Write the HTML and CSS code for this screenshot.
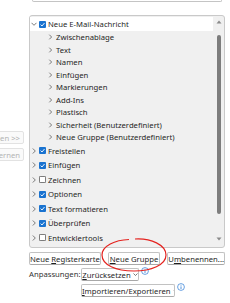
FILE: index.html
```html
<!DOCTYPE html>
<html>
<head>
<meta charset="utf-8">
<link rel="stylesheet" href="styles.css">
</head>
<body>
<div class="page">
  <div class="side">
    <div class="side-btn first"><span>Hinzufügen &gt;&gt;</span></div>
    <div class="side-btn"><span>Entfernen</span></div>
  </div>
  <div class="main">
    <div class="topbox"></div>
    <div class="tree">
      <div class="tree-body">
        <div class="row top sel">
          <svg class="chev" viewBox="0 0 6 6"><polyline points="0.5,1.8 3,4.3 5.5,1.8"/></svg>
          <svg class="cb" viewBox="0 0 7 7"><rect x="0" y="0" width="7" height="7" rx="1" class="on"/><polyline points="1.6,3.6 3,5 5.5,2" class="tick"/></svg>
          <span>Neue E-Mail-Nachricht</span>
        </div>
        <div class="row sub"><svg class="chev-s" viewBox="0 0 5 6"><polyline points="1.3,0.7 3.6,3 1.3,5.3"/></svg><span>Zwischenablage</span></div>
        <div class="row sub"><svg class="chev-s" viewBox="0 0 5 6"><polyline points="1.3,0.7 3.6,3 1.3,5.3"/></svg><span>Text</span></div>
        <div class="row sub"><svg class="chev-s" viewBox="0 0 5 6"><polyline points="1.3,0.7 3.6,3 1.3,5.3"/></svg><span>Namen</span></div>
        <div class="row sub"><svg class="chev-s" viewBox="0 0 5 6"><polyline points="1.3,0.7 3.6,3 1.3,5.3"/></svg><span>Einfügen</span></div>
        <div class="row sub"><svg class="chev-s" viewBox="0 0 5 6"><polyline points="1.3,0.7 3.6,3 1.3,5.3"/></svg><span>Markierungen</span></div>
        <div class="row sub"><svg class="chev-s" viewBox="0 0 5 6"><polyline points="1.3,0.7 3.6,3 1.3,5.3"/></svg><span>Add-Ins</span></div>
        <div class="row sub"><svg class="chev-s" viewBox="0 0 5 6"><polyline points="1.3,0.7 3.6,3 1.3,5.3"/></svg><span>Plastisch</span></div>
        <div class="row sub"><svg class="chev-s" viewBox="0 0 5 6"><polyline points="1.3,0.7 3.6,3 1.3,5.3"/></svg><span>Sicherheit (Benutzerdefiniert)</span></div>
        <div class="row sub"><svg class="chev-s" viewBox="0 0 5 6"><polyline points="1.3,0.7 3.6,3 1.3,5.3"/></svg><span>Neue Gruppe (Benutzerdefiniert)</span></div>
        <div class="row top cbrow">
          <svg class="chev" viewBox="0 0 6 6"><polyline points="1.8,0.5 4.3,3 1.8,5.5"/></svg>
          <svg class="cb" viewBox="0 0 7 7"><rect x="0" y="0" width="7" height="7" rx="1" class="on"/><polyline points="1.6,3.6 3,5 5.5,2" class="tick"/></svg>
          <span>Freistellen</span>
        </div>
        <div class="row top cbrow">
          <svg class="chev" viewBox="0 0 6 6"><polyline points="1.8,0.5 4.3,3 1.8,5.5"/></svg>
          <svg class="cb" viewBox="0 0 7 7"><rect x="0" y="0" width="7" height="7" rx="1" class="on"/><polyline points="1.6,3.6 3,5 5.5,2" class="tick"/></svg>
          <span>Einfügen</span>
        </div>
        <div class="row top cbrow">
          <svg class="chev" viewBox="0 0 6 6"><polyline points="1.8,0.5 4.3,3 1.8,5.5"/></svg>
          <svg class="cb" viewBox="0 0 7 7"><rect x="0.4" y="0.4" width="6.2" height="6.2" rx="0.8" class="off"/></svg>
          <span>Zeichnen</span>
        </div>
        <div class="row top cbrow">
          <svg class="chev" viewBox="0 0 6 6"><polyline points="1.8,0.5 4.3,3 1.8,5.5"/></svg>
          <svg class="cb" viewBox="0 0 7 7"><rect x="0" y="0" width="7" height="7" rx="1" class="on"/><polyline points="1.6,3.6 3,5 5.5,2" class="tick"/></svg>
          <span>Optionen</span>
        </div>
        <div class="row top cbrow">
          <svg class="chev" viewBox="0 0 6 6"><polyline points="1.8,0.5 4.3,3 1.8,5.5"/></svg>
          <svg class="cb" viewBox="0 0 7 7"><rect x="0" y="0" width="7" height="7" rx="1" class="on"/><polyline points="1.6,3.6 3,5 5.5,2" class="tick"/></svg>
          <span>Text formatieren</span>
        </div>
        <div class="row top cbrow">
          <svg class="chev" viewBox="0 0 6 6"><polyline points="1.8,0.5 4.3,3 1.8,5.5"/></svg>
          <svg class="cb" viewBox="0 0 7 7"><rect x="0" y="0" width="7" height="7" rx="1" class="on"/><polyline points="1.6,3.6 3,5 5.5,2" class="tick"/></svg>
          <span>Überprüfen</span>
        </div>
        <div class="row top cbrow">
          <svg class="chev" viewBox="0 0 6 6"><polyline points="1.8,0.5 4.3,3 1.8,5.5"/></svg>
          <svg class="cb" viewBox="0 0 7 7"><rect x="0.4" y="0.4" width="6.2" height="6.2" rx="0.8" class="off"/></svg>
          <span>Entwicklertools</span>
        </div>
      </div>
      <div class="scroll">
        <svg class="arrow" viewBox="0 0 6 4"><polygon points="0.5,3.5 3,0.5 5.5,3.5"/></svg>
        <div class="thumb"></div>
        <svg class="arrow" viewBox="0 0 6 4"><polygon points="0.5,0.5 3,3.5 5.5,0.5"/></svg>
      </div>
    </div>
    <div class="btn-row">
      <div class="btn w1"><span>Neue <u>R</u>egisterkarte</span></div>
      <div class="btn w2"><span><u>N</u>eue Gruppe</span></div>
      <div class="btn w3"><span>U<u>m</u>benennen...</span></div>
    </div>
    <div class="cust">
      <span class="label">Anpassungen:</span>
      <div class="cust-col">
        <div class="cust-line">
          <div class="btn dd w4"><span><u>Z</u>urücksetzen</span><svg class="dd-arrow" viewBox="0 0 5 3"><polyline points="0.5,0.5 2.5,2.5 4.5,0.5"/></svg></div>
          <svg class="info" viewBox="0 0 8 8"><circle cx="4" cy="4" r="3.4"/><line x1="4" y1="3.4" x2="4" y2="6"/><line x1="4" y1="1.9" x2="4" y2="2.6"/></svg>
        </div>
        <div class="cust-line">
          <div class="btn dd w5"><span><u>I</u>mportieren/Exportieren</span><svg class="dd-arrow" viewBox="0 0 5 3"><polyline points="0.5,0.5 2.5,2.5 4.5,0.5"/></svg></div>
          <svg class="info" viewBox="0 0 8 8"><circle cx="4" cy="4" r="3.4"/><line x1="4" y1="3.4" x2="4" y2="6"/><line x1="4" y1="1.9" x2="4" y2="2.6"/></svg>
        </div>
      </div>
    </div>
  </div>
  <svg class="annot" viewBox="0 0 70 38"><path d="M36,3 C52,2 67,9 67,19 C67,29 52,35 35,35 C17,35 3,29 3,19 C3,10 16,4 30,3.5"/></svg>
</div>
</body>
</html>
```

FILE: styles.css
```css
html, body {
  margin: 0;
  padding: 0;
  background: #ffffff;
}
body {
  width: 230px;
  height: 303px;
  overflow: hidden;
  font-family: "Noto Sans", "Open Sans", sans-serif;
  font-size: 7.7px;
  color: #1f1f1f;
}
.page {
  position: relative;
  display: flex;
  width: 230px;
  height: 303px;
}
.side {
  width: 29px;
  flex: none;
  overflow: hidden;
  display: flex;
  flex-direction: column;
  align-items: flex-end;
}
.side-btn {
  width: 64px;
  height: 13px;
  margin-right: 5px;
  box-sizing: border-box;
  border: 1px solid #e2e2e2;
  border-radius: 2px;
  background: #fafafa;
  color: #b4b4b4;
  display: flex;
  align-items: center;
  justify-content: flex-end;
  padding-right: 3px;
  white-space: nowrap;
  margin-top: 4px;
}
.side-btn.first {
  margin-top: 131px;
}
.main {
  width: 196px;
  flex: none;
  display: flex;
  flex-direction: column;
}
.topbox {
  height: 1px;
  margin: 0 3px 0 3px;
  border: 1px solid #c4c4c4;
  border-top: 0;
  border-radius: 0 0 3px 3px;
}
.tree {
  margin-top: 13px;
  height: 233px;
  box-sizing: border-box;
  border: 1px solid #c9c9c9;
  border-radius: 3px;
  background: #f0f0f0;
  display: flex;
}
.tree-body {
  flex: 1;
  padding-top: 1px;
  overflow: hidden;
}
.row {
  display: flex;
  align-items: center;
  white-space: nowrap;
}
.row.top {
  padding-left: 1px;
}
.row.sel {
  height: 14px;
  background: #ffffff;
}
.row.sub {
  height: 12.5px;
  padding-left: 18px;
}
.row.cbrow {
  height: 14.5px;
}
.chev {
  width: 6px;
  height: 6px;
  flex: none;
}
.chev polyline, .chev-s polyline {
  fill: none;
  stroke: #5a5a5a;
  stroke-width: 0.8;
}
.chev-s {
  width: 5px;
  height: 6px;
  flex: none;
  margin-right: 3px;
}
.cb {
  width: 7px;
  height: 7px;
  flex: none;
  margin-left: 2px;
  margin-right: 2px;
}
.cb .on {
  fill: #1a73d0;
}
.cb .off {
  fill: #ffffff;
  stroke: #4a4a4a;
  stroke-width: 0.8;
}
.cb .tick {
  fill: none;
  stroke: #ffffff;
  stroke-width: 0.9;
}
.scroll {
  width: 11px;
  flex: none;
  display: flex;
  flex-direction: column;
  align-items: center;
}
.arrow {
  width: 6px;
  height: 4px;
  margin-top: 4px;
  fill: #8a8a8a;
}
.scroll .arrow:last-child {
  margin-top: 23px;
}
.thumb {
  margin-top: 11px;
  width: 4px;
  height: 179px;
  border-radius: 2px;
  background: #7d7d7d;
}
.btn-row {
  display: flex;
  gap: 7px;
  margin-top: 4px;
}
.btn {
  height: 13px;
  box-sizing: border-box;
  border: 1px solid #c2c2c2;
  border-bottom-color: #a8a8a8;
  border-radius: 2px;
  background: #ffffff;
  display: flex;
  align-items: center;
  justify-content: center;
  white-space: nowrap;
  color: #1f1f1f;
}
.btn u {
  text-decoration-thickness: 0.6px;
  text-underline-offset: 1px;
}
.w1 { width: 72px; }
.w2 { width: 53px; }
.w3 { width: 58px; }
.w4 { width: 58px; }
.w5 { width: 94px; }
.cust {
  display: flex;
  margin-top: 3px;
}
.label {
  width: 52px;
  flex: none;
  color: #333333;
  padding-top: 1px;
  white-space: nowrap;
}
.cust-col {
  display: flex;
  flex-direction: column;
  gap: 3px;
}
.cust-line {
  display: flex;
  align-items: flex-start;
  gap: 2px;
}
.btn.dd {
  height: 13px;
  gap: 2px;
}
.dd-arrow {
  width: 5px;
  height: 3px;
}
.dd-arrow polyline {
  fill: none;
  stroke: #444444;
  stroke-width: 0.7;
}
.info {
  width: 8px;
  height: 8px;
  margin-top: -1px;
}
.info circle {
  fill: #ffffff;
  stroke: #2a7ad6;
  stroke-width: 0.7;
}
.info line {
  stroke: #2a7ad6;
  stroke-width: 0.8;
}
.annot {
  position: absolute;
  left: 99px;
  top: 236px;
  width: 70px;
  height: 38px;
}
.annot path {
  fill: none;
  stroke: #e4231f;
  stroke-width: 1.2;
}
```
